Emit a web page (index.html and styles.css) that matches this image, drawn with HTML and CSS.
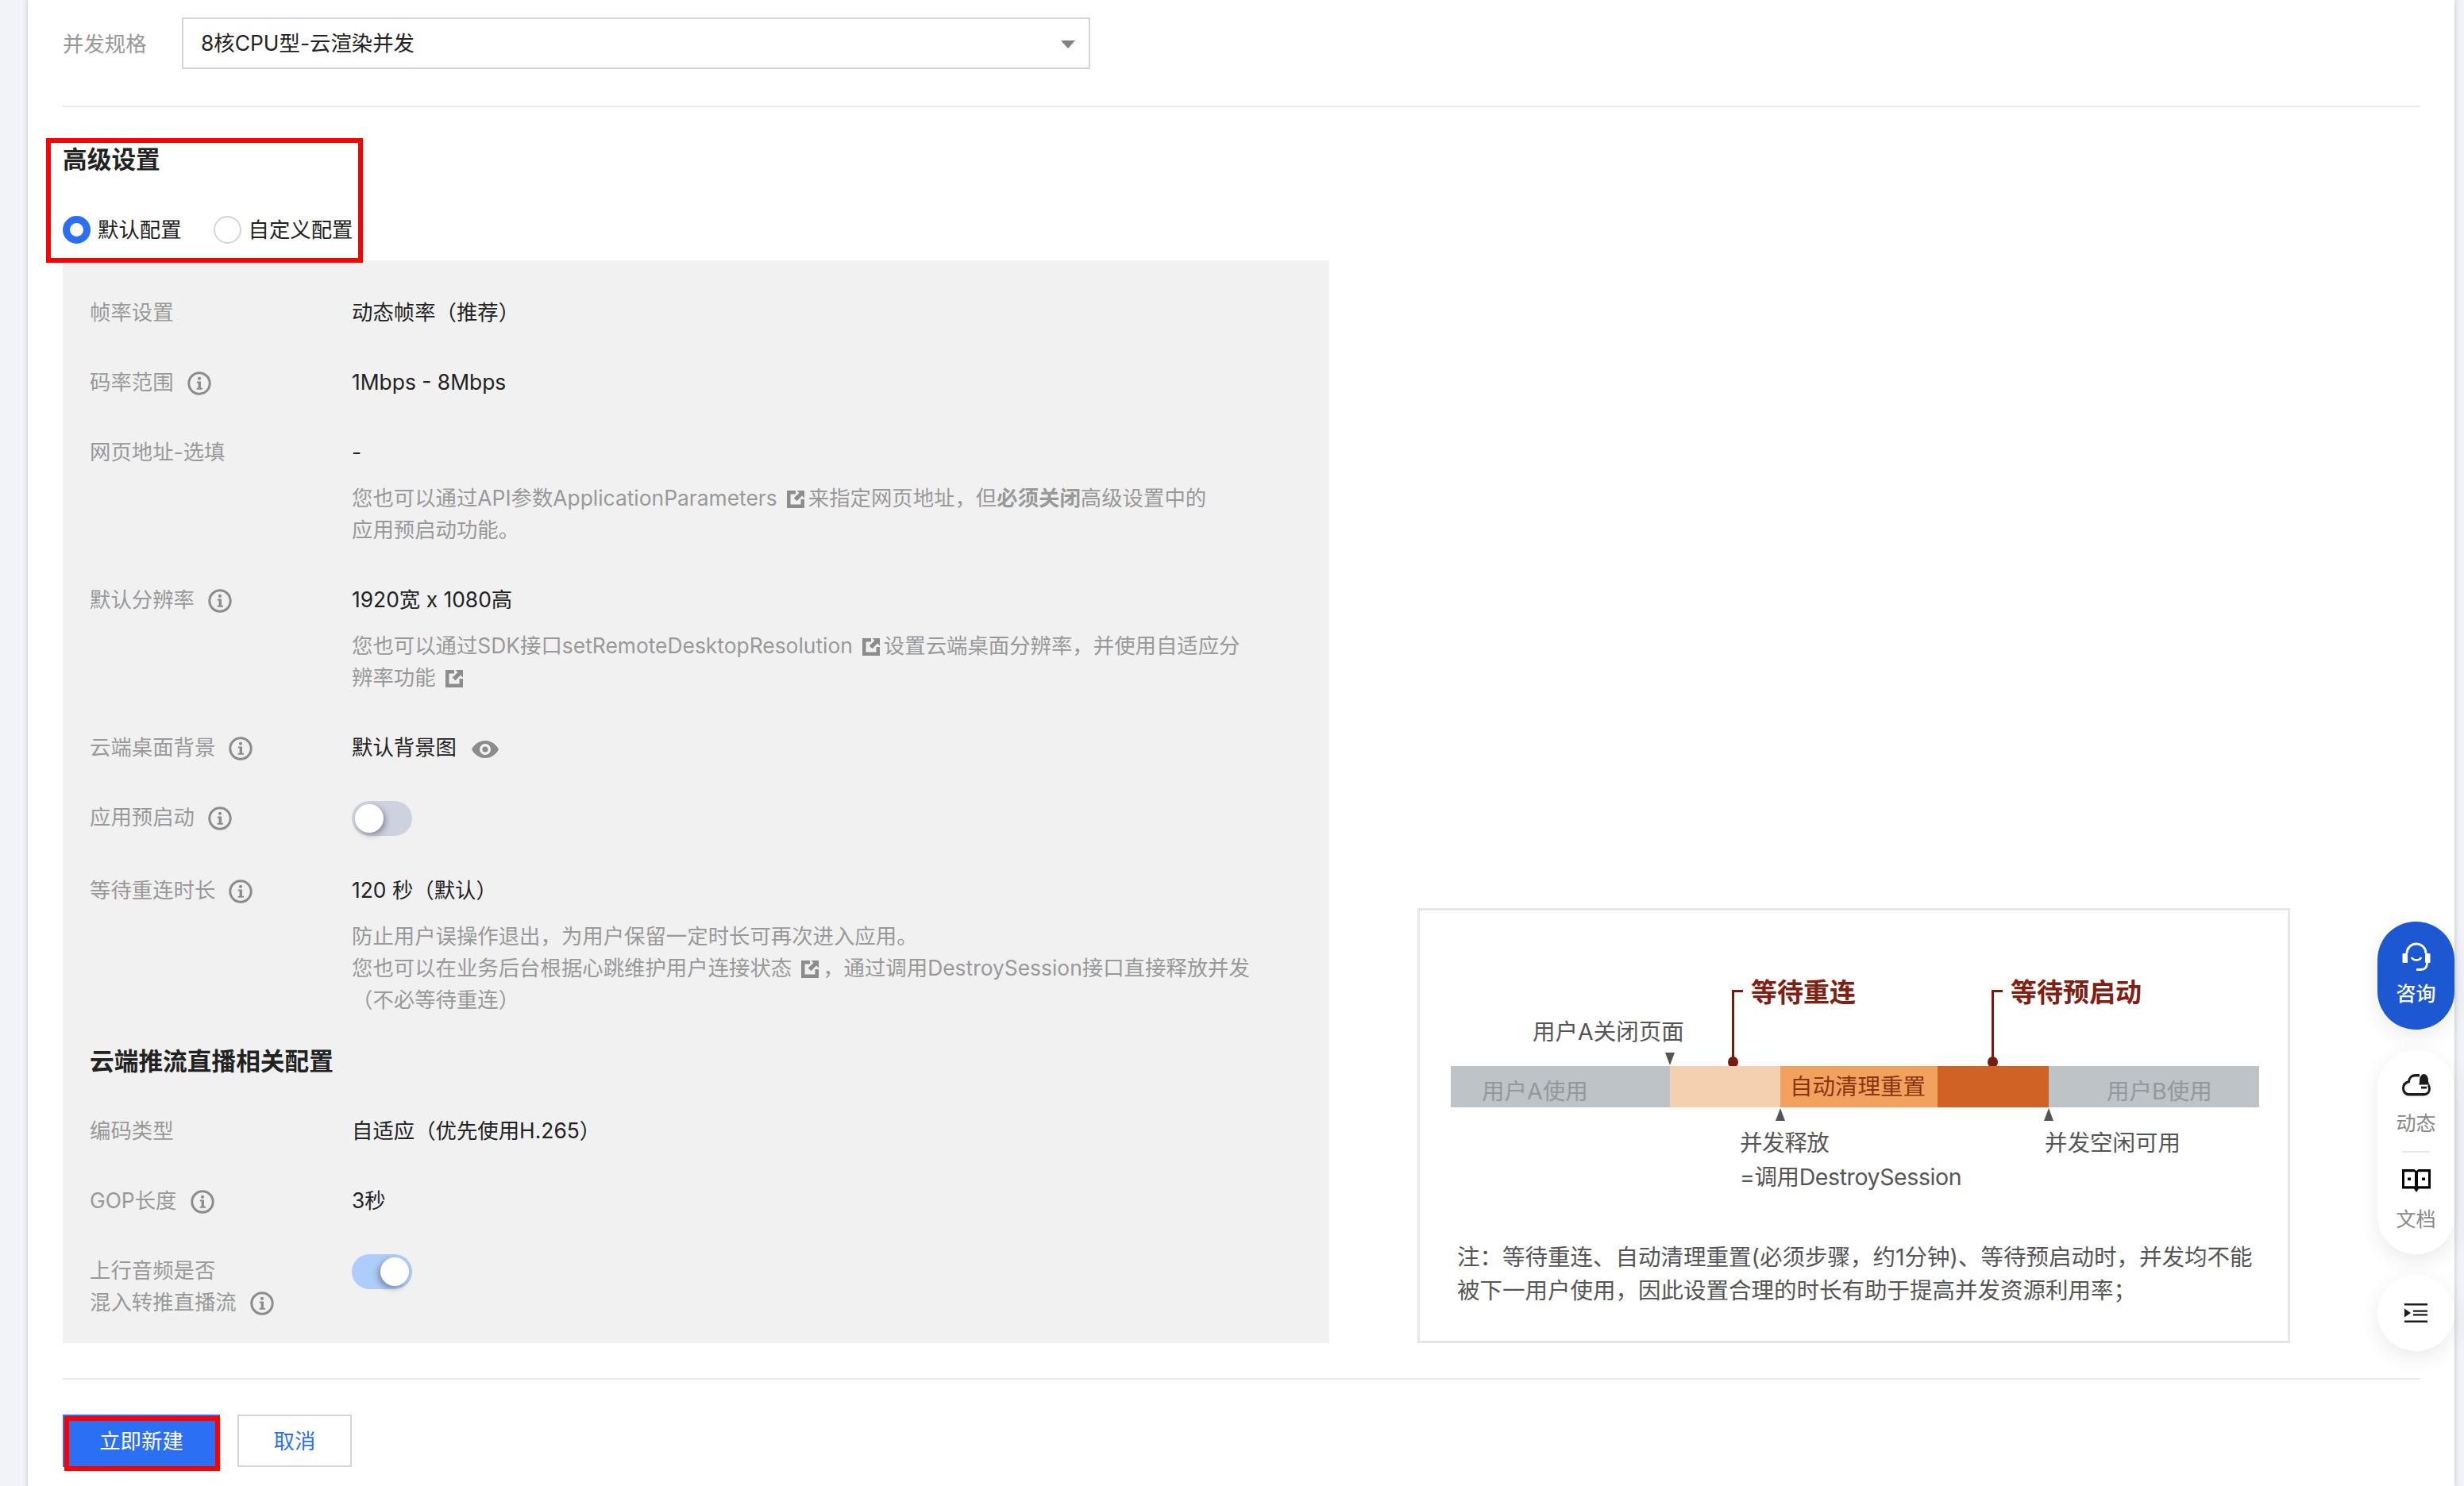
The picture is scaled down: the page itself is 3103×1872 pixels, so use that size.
FILE: index.html
```html
<!DOCTYPE html>
<html lang="zh-CN">
<head>
  <meta charset="UTF-8" />
  <meta name="viewport" content="width=device-width, initial-scale=1.0"/>
  <title>新建应用 - 高级设置</title>
  <link rel="stylesheet" href="styles.css">
</head>
<body>

  <svg class="icon-defs" width="0" height="0">
    <symbol id="i-info" viewBox="0 0 30 30">
      <circle cx="15" cy="15" r="13.2" fill="none" stroke="currentColor" stroke-width="3"/>
      <circle cx="15" cy="8.8" r="2.1" fill="currentColor"/>
      <path d="M11.8 12.5h5.2v8.2h2v2h-7.400v-2h2v-6.300h-1.800z" fill="currentColor"/>
    </symbol>
    <symbol id="i-ext" viewBox="0 0 22 22">
      <path d="M0 0h11v4.500H4.500v13h13V11H22v11H0z" fill="currentColor"/>
      <path d="M12.500 0H22v9.500l-3-3-6.500 6.800-3.800-3.800L15.500 3z" fill="currentColor"/>
    </symbol>
  </svg>

  <main class="card">
    <div class="form-row">
      <span class="form-label">并发规格</span>
      <div class="select">8核CPU型-云渲染并发<i class="select-arrow"></i></div>
    </div>
    <hr class="divider divider-top">

    <section class="advanced">
      <h2 class="title">高级设置</h2>
      <div class="radios">
        <label class="radio"><i class="radio-dot on"></i>默认配置</label>
        <label class="radio"><i class="radio-dot"></i>自定义配置</label>
      </div>
      <div class="mark mark-advanced"></div>
    </section>

    <div class="columns">
      <div class="panel">
        <div class="row">
          <div class="label">帧率设置</div>
          <div class="value">动态帧率（推荐）</div>
        </div>
        <div class="row">
          <div class="label">码率范围<svg class="info"><use href="#i-info"/></svg></div>
          <div class="value">1Mbps - 8Mbps</div>
        </div>
        <div class="row">
          <div class="label">网页地址-选填</div>
          <div class="value">-
            <p class="desc">您也可以通过API参数ApplicationParameters<svg class="ext"><use href="#i-ext"/></svg>来指定网页地址，但<b>必须关闭</b>高级设置中的<br>应用预启动功能。</p>
          </div>
        </div>
        <div class="row">
          <div class="label">默认分辨率<svg class="info"><use href="#i-info"/></svg></div>
          <div class="value">1920宽 x 1080高
            <p class="desc">您也可以通过SDK接口setRemoteDesktopResolution<svg class="ext"><use href="#i-ext"/></svg>设置云端桌面分辨率，并使用自适应分<br>辨率功能<svg class="ext"><use href="#i-ext"/></svg></p>
          </div>
        </div>
        <div class="row">
          <div class="label">云端桌面背景<svg class="info"><use href="#i-info"/></svg></div>
          <div class="value">默认背景图<svg class="eye" viewBox="0 0 34 22"><path d="M17 0C9 0 3 5 0 11c3 6 9 11 17 11s14-5 17-11C31 5 25 0 17 0zm0 18a7 7 0 1 1 0-14 7 7 0 0 1 0 14z" fill="#8c8c8c"/><circle cx="17" cy="11" r="3.6" fill="#8c8c8c"/></svg></div>
        </div>
        <div class="row row-switch">
          <div class="label">应用预启动<svg class="info"><use href="#i-info"/></svg></div>
          <div class="value"><i class="switch"></i></div>
        </div>
        <div class="row">
          <div class="label">等待重连时长<svg class="info"><use href="#i-info"/></svg></div>
          <div class="value">120 秒（默认）
            <p class="desc">防止用户误操作退出，为用户保留一定时长可再次进入应用。<br>您也可以在业务后台根据心跳维护用户连接状态<svg class="ext"><use href="#i-ext"/></svg>，通过调用DestroySession接口直接释放并发<br>（不必等待重连）</p>
          </div>
        </div>
        <h3 class="subtitle">云端推流直播相关配置</h3>
        <div class="row">
          <div class="label">编码类型</div>
          <div class="value">自适应（优先使用H.265）</div>
        </div>
        <div class="row">
          <div class="label">GOP长度<svg class="info"><use href="#i-info"/></svg></div>
          <div class="value">3秒</div>
        </div>
        <div class="row">
          <div class="label">上行音频是否<br>混入转推直播流<svg class="info"><use href="#i-info"/></svg></div>
          <div class="value"><i class="switch on"></i></div>
        </div>
      </div>

      <figure class="timeline">
        <div class="pin pin-wait"></div>
        <div class="pin pin-boot"></div>
        <span class="tl-head tl-head-wait">等待重连</span>
        <span class="tl-head tl-head-boot">等待预启动</span>
        <span class="tl-text tl-close">用户A关闭页面</span>
        <i class="tri tri-down tri-close"></i>
        <div class="tl-bar">
          <div class="seg seg-a">用户A使用</div>
          <div class="seg seg-wait"></div>
          <div class="seg seg-clean">自动清理重置</div>
          <div class="seg seg-boot"></div>
          <div class="seg seg-b">用户B使用</div>
        </div>
        <i class="tri tri-up tri-release"></i>
        <i class="tri tri-up tri-free"></i>
        <span class="tl-text tl-release">并发释放<br>=调用DestroySession</span>
        <span class="tl-text tl-free">并发空闲可用</span>
        <figcaption class="tl-note">注：等待重连、自动清理重置(必须步骤，约1分钟)、等待预启动时，并发均不能<br>被下一用户使用，因此设置合理的时长有助于提高并发资源利用率；</figcaption>
      </figure>
    </div>

    <hr class="divider divider-bottom">
    <div class="actions">
      <button class="btn btn-primary">立即新建<span class="mark mark-btn"></span></button>
      <button class="btn btn-cancel">取消</button>
    </div>
  </main>

  <aside class="float-bar">
    <div class="float-item float-blue">
      <svg class="float-icon" viewBox="0 0 36 36">
        <path d="M6 14a12 12 0 0 1 24 0" fill="none" stroke="#fff" stroke-width="3"/>
        <rect x="0.5" y="14" width="6.5" height="12" rx="1" fill="#fff"/>
        <rect x="29" y="14" width="6.5" height="12" rx="1" fill="#fff"/>
        <path d="M12 19c2 4.500 10 4.500 12 0" fill="none" stroke="#fff" stroke-width="2.6"/>
        <path d="M31.5 26c0 6-3 8.500-8 8.500H18" fill="none" stroke="#fff" stroke-width="2.8"/>
      </svg>
      <span>咨询</span>
    </div>
    <div class="float-item float-group">
      <svg class="float-icon" viewBox="0 0 36 26" preserveAspectRatio="none">
        <path d="M22 2.500h-6c-4 0-7 3-7.500 7C4 10.500 1.500 13.500 1.500 17c0 4 3 7 7 7h19c4 0 7-2.500 7-6.500 0-1.500-.5-3-1.500-4" fill="none" stroke="#1c1c1c" stroke-width="3"/>
        <path d="M21 13c1-1.500 1-3 1-5 0-4 2.500-7 5.500-7S33 4 33 8c0 2 .5 3.500 2 5z" fill="#1c1c1c"/>
        <path d="M24 15h7v2.500h-7z" fill="#1c1c1c"/>
      </svg>
      <span>动态</span>
      <hr class="float-line">
      <svg class="float-icon" viewBox="0 0 36 26" preserveAspectRatio="none">
        <path d="M0 0h15.500L18 2l2.500-2H36v22H21l-3 4-3-4H0z" fill="#000"/>
        <path d="M3 3h13v16H3zM20 3h13v16H20z" fill="#fff"/>
        <path d="M7 9.500h4v3H7zM25 9.500h4v3h-4z" fill="#000"/>
      </svg>
      <span>文档</span>
    </div>
    <div class="float-item float-toggle">
      <svg class="toggle-icon" viewBox="0 0 29 20" preserveAspectRatio="none">
        <path d="M0 0h29v2H0zM0 18h29v2H0zM11 7h18v2H11zM11 11h18v2H11z" fill="#1c1c1c"/>
        <path d="M0 5.500 8 10l-8 4.500z" fill="#1c1c1c"/>
      </svg>
    </div>
  </aside>

</body>
</html>
```

FILE: styles.css
```css
* {
  box-sizing: border-box;
}

html, body {
  margin: 0;
  height: 100%;
}

body {
  height: 1872px;
  overflow: hidden;
  background-color: #f2f3f8;
  padding: 0 12px 0 35px;
  font-family: Inter, "Noto Sans CJK SC", sans-serif;
  font-size: 26.4px;
  line-height: 40px;
  color: #222;
}

.icon-defs {
  display: block;
}

.card {
  height: 1872px;
  background-color: #fff;
  padding: 22px 43px 0 44px;
  box-shadow: 0 0 6px rgba(54, 58, 80, 0.3);
}

/* top select */
.form-row {
  display: flex;
  align-items: center;
}

.form-label {
  width: 150px;
  color: #999;
}

.select {
  position: relative;
  width: 1144px;
  height: 65px;
  padding-left: 22px;
  border: 2px solid #d0d5e0;
  line-height: 61px;
}

.select-arrow {
  position: absolute;
  right: 17px;
  top: 27px;
  border-left: 9px solid transparent;
  border-right: 9px solid transparent;
  border-top: 10px solid #7f8187;
}

.divider {
  height: 2px;
  margin: 0;
  border: none;
  background-color: #e7e9ee;
}

.divider-top {
  margin-top: 46px;
}

.divider-bottom {
  margin-top: 44px;
}

/* advanced head */
.advanced {
  position: relative;
  padding-top: 46px;
}

.title {
  margin: 0;
  font-size: 30.7px;
  line-height: 40px;
}

.radios {
  display: flex;
  margin-top: 48px;
  margin-bottom: 19px;
}

.radio {
  display: flex;
  align-items: center;
  margin-right: 40px;
}

.radio-dot {
  width: 35px;
  height: 35px;
  margin-right: 9px;
  border: 2px solid #d0d5e0;
  border-radius: 50%;
  background-color: #fff;
}

.radio-dot.on {
  border: 9px solid #2b6ff5;
}

.mark {
  position: absolute;
  border: 6px solid #f00;
}

.mark-advanced {
  left: -21px;
  top: 39px;
  width: 399px;
  height: 157px;
}

/* grey settings panel */
.columns {
  display: flex;
  justify-content: space-between;
  align-items: flex-end;
  padding-right: 164px;
}

.panel {
  width: 1595px;
  padding: 45px 34px 32px;
  background-color: #f1f1f2;
}

.row {
  display: flex;
  margin-bottom: 48px;
}

.row:last-child {
  margin-bottom: 0;
}

.label {
  width: 330px;
  flex-shrink: 0;
  color: #999;
}

.value {
  flex: 1;
}

.desc {
  margin: 18px 0 0;
  color: #999;
}

.info {
  width: 30px;
  height: 30px;
  margin-left: 17px;
  color: #8c8c8c;
  vertical-align: -7px;
}

.ext {
  width: 22px;
  height: 22px;
  margin: 0 5px 0 12px;
  color: #8c8c8c;
  vertical-align: -3px;
}

.eye {
  width: 34px;
  height: 22px;
  margin-left: 19px;
  vertical-align: -4px;
}

.subtitle {
  margin: -10px 0 47px;
  font-size: 30.7px;
  line-height: 40px;
}

.switch {
  position: relative;
  display: block;
  width: 76px;
  height: 44px;
  border-radius: 22px;
  background-color: #cdd3de;
}

.switch::after {
  content: "";
  position: absolute;
  left: 4px;
  top: 4px;
  width: 36px;
  height: 36px;
  border-radius: 50%;
  background-color: #fff;
  box-shadow: 3px 3px 7px rgba(54, 58, 80, 0.45);
}

.switch.on {
  background-color: #aecdfb;
}

.switch.on::after {
  left: 36px;
  box-shadow: -3px 3px 7px rgba(54, 58, 80, 0.45);
}

.row-switch .value {
  height: 44px;
}

/* timeline picture: free canvas, coordinates come from the drawing */
.timeline {
  position: relative;
  width: 1099px;
  height: 548px;
  margin: 0;
  border: 3px solid #e6e6e6;
  background-color: #fff;
  color: #555;
  font-size: 28.5px;
}

.tl-bar {
  position: absolute;
  left: 39px;
  top: 196px;
  display: flex;
  width: 1018px;
  height: 52px;
  line-height: 52px;
}

.seg {
  height: 100%;
}

.seg-a, .seg-b {
  padding-top: 6px;
  background-color: #bdc3c6;
  color: #8f999e;
}

.seg-a {
  width: 276px;
  padding-left: 39px;
}

.seg-wait {
  width: 139px;
  background-color: #f5d0ae;
}

.seg-clean {
  width: 198px;
  padding-left: 12px;
  background-color: #f2a15e;
  color: #8a3510;
}

.seg-boot {
  width: 140px;
  background-color: #d06226;
}

.seg-b {
  width: 265px;
  padding-left: 73px;
}

.pin {
  position: absolute;
  top: 100px;
  width: 14px;
  height: 96px;
  border-top: 3px solid #7a1a0c;
  border-left: 3px solid #7a1a0c;
}

.pin::after {
  content: "";
  position: absolute;
  left: -8px;
  top: 81px;
  width: 13px;
  height: 14px;
  border-radius: 50%;
  background-color: #7a1a0c;
}

.pin-wait {
  left: 393px;
}

.pin-boot {
  left: 720px;
}

.tl-head {
  position: absolute;
  top: 83px;
  color: #7f2012;
  font-size: 33px;
  line-height: 40px;
  font-weight: bold;
}

.tl-head-wait {
  left: 417px;
}

.tl-head-boot {
  left: 744px;
}

.tl-text {
  position: absolute;
  line-height: 43px;
}

.tl-close {
  left: 142px;
  top: 131px;
}

.tl-release {
  left: 403px;
  top: 271px;
  letter-spacing: -0.4px;
}

.tl-free {
  left: 787px;
  top: 271px;
}

.tri {
  position: absolute;
  border-left: 6px solid transparent;
  border-right: 6px solid transparent;
}

.tri-down {
  border-top: 16px solid #555;
}

.tri-up {
  border-bottom: 16px solid #555;
}

.tri-close {
  left: 309px;
  top: 179px;
}

.tri-release {
  left: 448px;
  top: 249px;
}

.tri-free {
  left: 786px;
  top: 249px;
}

.tl-note {
  position: absolute;
  left: 47px;
  top: 416px;
  line-height: 42px;
  white-space: nowrap;
}

/* bottom buttons */
.actions {
  display: flex;
  gap: 22px;
  margin-top: 44px;
}

.btn {
  height: 66px;
  padding: 0 0 4px;
  font-family: inherit;
  font-size: 26.4px;
  cursor: pointer;
}

.btn-primary {
  position: relative;
  width: 198px;
  border: none;
  background-color: #2b6ff5;
  color: #fff;
}

.btn-cancel {
  width: 144px;
  border: 2px solid #d0d5e0;
  background-color: #fff;
  color: #2b6ff5;
}

.mark-btn {
  left: 2px;
  top: 2px;
  width: 196px;
  height: 69px;
}

/* floating tools on the right edge */
.float-bar {
  position: absolute;
  right: 12px;
  top: 1161px;
  display: flex;
  flex-direction: column;
  gap: 26px;
  width: 97px;
}

.float-item {
  display: flex;
  flex-direction: column;
  align-items: center;
  border-radius: 48px;
  background-color: #fff;
  box-shadow: 0 8px 24px rgba(54, 58, 80, 0.1);
  color: #888;
  font-family: "Noto Sans CJK SC", sans-serif;
  font-size: 25px;
}

.float-icon {
  width: 36px;
  height: 29px;
  margin-bottom: 12px;
  flex-shrink: 0;
}

.float-blue {
  height: 136px;
  padding-top: 26px;
  background-color: #1c58d2;
  color: #fff;
  font-weight: 500;
}

.float-blue .float-icon {
  height: 36px;
  margin-bottom: 7px;
}

.float-group {
  height: 257px;
  padding-top: 29px;
}

.float-line {
  width: 35px;
  height: 2px;
  flex-shrink: 0;
  margin: 17px 0 21px;
  border: none;
  background-color: #e7e9ee;
}

.float-toggle {
  height: 96px;
  justify-content: center;
}

.toggle-icon {
  width: 29px;
  height: 24px;
}
```
